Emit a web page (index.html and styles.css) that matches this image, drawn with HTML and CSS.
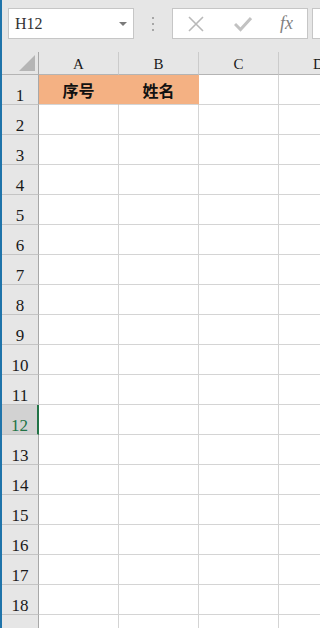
FILE: index.html
```html
<!DOCTYPE html>
<html lang="zh">
<head>
    <meta charset="UTF-8">
    <meta name="viewport" content="width=device-width, initial-scale=1.0">
    <title>Sheet</title>
    <link rel="stylesheet" href="styles.css">
</head>
<body>
    <div class="strip"></div>
    <div class="main">
        <div class="toolbar">
            <div class="name-box">
                <span>H12</span>
                <span class="arrow"></span>
            </div>
            <div class="dots"><i></i><i></i><i></i></div>
            <div class="formula-box">
                <svg class="icon" width="18" height="16" viewBox="0 0 18 16">
                    <path d="M2 1 L16 15 M16 1 L2 15" stroke="#b9b9b9" stroke-width="1.6" fill="none"/>
                </svg>
                <svg class="icon" width="18" height="16" viewBox="0 0 18 16">
                    <path d="M1 8 L6.5 13.5 L17 2" stroke="#c2c2c2" stroke-width="3" fill="none"/>
                </svg>
                <span class="fx">fx</span>
            </div>
            <div class="more-box"></div>
        </div>
        <div class="sheet">
            <div class="corner"><span class="tri"></span></div>
            <div class="col-head">A</div>
            <div class="col-head">B</div>
            <div class="col-head">C</div>
            <div class="col-head">D</div>
        </div>
        <div class="sheet" id="rows"></div>
    </div>

    <script>
    // build rows 1..19
    const rows = document.getElementById("rows");
    for (let i = 1; i <= 19; i++) {
        const head = document.createElement("div");
        head.className = "row-head" + (i === 12 ? " active" : "");
        head.textContent = i;
        rows.appendChild(head);
        for (let c = 0; c < 4; c++) {
            const cell = document.createElement("div");
            cell.className = "cell";
            if (i === 1 && c < 2) {
                cell.className += " filled";
                cell.textContent = c === 0 ? "序号" : "姓名";
            }
            rows.appendChild(cell);
        }
    }
    </script>
</body>
</html>
```

FILE: styles.css
```css
* {
    margin: 0;
    padding: 0;
    box-sizing: border-box;
}
body {
    display: flex;
    width: 320px;
    height: 628px;
    overflow: hidden;
    background: #fff;
    font-family: "Liberation Serif", serif;
    color: #1a1a1a;
}
.strip {
    width: 2px;
    flex-shrink: 0;
    background: #1f74aa;
}
.main {
    flex: 1;
    display: flex;
    flex-direction: column;
    overflow: hidden;
}
.toolbar {
    height: 52px;
    flex-shrink: 0;
    background: #e6e6e6;
    display: flex;
    align-items: flex-start;
    padding: 8px 0 0 6px;
}
.toolbar > * {
    flex-shrink: 0;
}
.name-box {
    width: 126px;
    height: 31px;
    background: #fff;
    border: 1px solid #c6c6c6;
    display: flex;
    align-items: center;
    justify-content: space-between;
    padding: 0 6px 0 6px;
    font-size: 16px;
    color: #333;
}
.arrow {
    width: 0;
    height: 0;
    border-left: 4px solid transparent;
    border-right: 4px solid transparent;
    border-top: 4px solid #7a7a7a;
}
.dots {
    width: 38px;
    display: flex;
    flex-direction: column;
    align-items: center;
    gap: 4px;
    padding-top: 9px;
}
.dots i {
    width: 2px;
    height: 2px;
    background: #a6a6a6;
}
.formula-box {
    width: 136px;
    height: 31px;
    background: #fff;
    border: 1px solid #c6c6c6;
    display: flex;
    align-items: center;
    justify-content: space-between;
    padding: 0 14px 0 14px;
}
.fx {
    font-style: italic;
    font-size: 18px;
    color: #7f7f7f;
    font-family: "Liberation Serif", serif;
}
.more-box {
    margin-left: 4px;
    width: 20px;
    height: 31px;
    background: #fff;
    border: 1px solid #c6c6c6;
    border-right: none;
}
.sheet {
    display: grid;
    grid-template-columns: 37px repeat(4, 80px);
}
.corner {
    height: 23px;
    background: #e6e6e6;
    border-right: 1px solid #a8a8a8;
    border-bottom: 1px solid #b4b4b4;
    position: relative;
}
.tri {
    position: absolute;
    right: 3px;
    bottom: 3px;
    width: 0;
    height: 0;
    border-left: 16px solid transparent;
    border-bottom: 16px solid #b5b5b5;
}
.col-head {
    height: 23px;
    background: #e6e6e6;
    border-right: 1px solid #cbcbcb;
    border-bottom: 1px solid #b4b4b4;
    display: flex;
    align-items: flex-end;
    justify-content: center;
    font-size: 15px;
    line-height: 1;
    padding-bottom: 2px;
}
.row-head {
    height: 30px;
    background: #e6e6e6;
    border-right: 1px solid #a8a8a8;
    border-bottom: 1px solid #c4c4c4;
    display: flex;
    align-items: flex-end;
    justify-content: center;
    font-size: 17px;
    line-height: 1;
}
.row-head.active {
    background: #d2d2d2;
    color: #217346;
    border-right: 2px solid #217346;
}
.cell {
    height: 30px;
    border-right: 1px solid #d4d4d4;
    border-bottom: 1px solid #d4d4d4;
    display: flex;
    align-items: center;
    justify-content: center;
    font-family: "Noto Sans CJK SC", sans-serif;
    font-weight: bold;
    font-size: 16px;
    color: #111;
}
.cell.filled {
    background: #f4b183;
    border-right-color: #f4b183;
}
```
